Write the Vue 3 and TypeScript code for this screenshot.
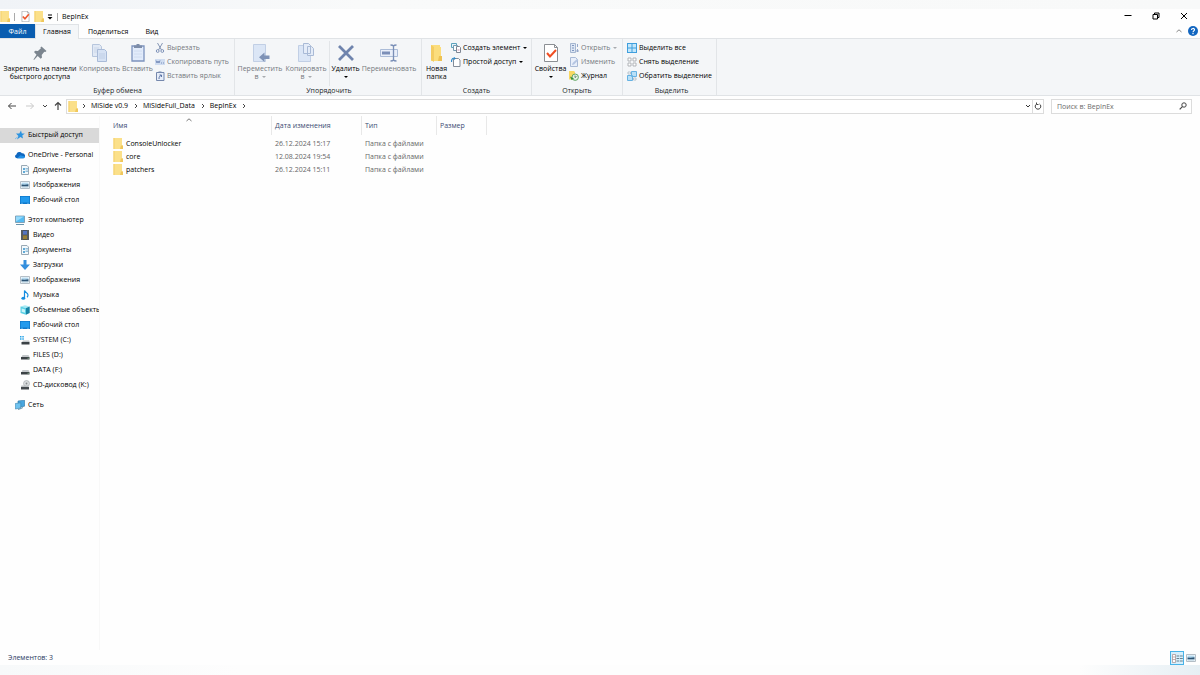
<script setup lang="ts">
import { ref } from 'vue'

interface Command {
  icon: string
  label: string
  lines?: string[]
  menu?: boolean
  off?: boolean
  split?: boolean
}
interface Group {
  id: string
  title: string
  big: Command[]
  small: Command[]
}
interface NavItem {
  icon: string
  label: string
}

const groups: Group[] = [
  {
    id: 'clipboard',
    title: 'Буфер обмена',
    big: [
      { icon: 'pin', label: 'Закрепить', lines: ['Закрепить на панели', 'быстрого доступа'] },
      { icon: 'copy', label: 'Копировать', lines: ['Копировать'], off: true },
      { icon: 'paste', label: 'Вставить', lines: ['Вставить'], off: true },
    ],
    small: [
      { icon: 'cut', label: 'Вырезать', off: true },
      { icon: 'path', label: 'Скопировать путь', off: true },
      { icon: 'shortcut', label: 'Вставить ярлык', off: true },
    ],
  },
  {
    id: 'organize',
    title: 'Упорядочить',
    big: [
      { icon: 'move', label: 'Переместить в', lines: ['Переместить', 'в'], menu: true, off: true },
      { icon: 'copyto', label: 'Копировать в', lines: ['Копировать', 'в'], menu: true, off: true },
      { icon: 'delete', label: 'Удалить', lines: ['Удалить', ''], menu: true, split: true },
      { icon: 'rename', label: 'Переименовать', lines: ['Переименовать'], off: true },
    ],
    small: [],
  },
  {
    id: 'create',
    title: 'Создать',
    big: [{ icon: 'newfolder', label: 'Новая папка', lines: ['Новая', 'папка'] }],
    small: [
      { icon: 'newitem', label: 'Создать элемент', menu: true },
      { icon: 'easy', label: 'Простой доступ', menu: true },
    ],
  },
  {
    id: 'open',
    title: 'Открыть',
    big: [{ icon: 'props', label: 'Свойства', lines: ['Свойства', ''], menu: true }],
    small: [
      { icon: 'open', label: 'Открыть', menu: true, off: true },
      { icon: 'edit', label: 'Изменить', off: true },
      { icon: 'history', label: 'Журнал' },
    ],
  },
  {
    id: 'select',
    title: 'Выделить',
    big: [],
    small: [
      { icon: 'selall', label: 'Выделить все' },
      { icon: 'selnone', label: 'Снять выделение' },
      { icon: 'selinv', label: 'Обратить выделение' },
    ],
  },
]

const sections: { root: NavItem; children: NavItem[] }[] = [
  { root: { icon: 'star', label: 'Быстрый доступ' }, children: [] },
  {
    root: { icon: 'cloud', label: 'OneDrive - Personal' },
    children: [
      { icon: 'doc', label: 'Документы' },
      { icon: 'image', label: 'Изображения' },
      { icon: 'desktop', label: 'Рабочий стол' },
    ],
  },
  {
    root: { icon: 'pc', label: 'Этот компьютер' },
    children: [
      { icon: 'video', label: 'Видео' },
      { icon: 'doc', label: 'Документы' },
      { icon: 'download', label: 'Загрузки' },
      { icon: 'image', label: 'Изображения' },
      { icon: 'music', label: 'Музыка' },
      { icon: 'cube', label: 'Объемные объекты' },
      { icon: 'desktop', label: 'Рабочий стол' },
      { icon: 'sysdisk', label: 'SYSTEM (C:)' },
      { icon: 'disk', label: 'FILES (D:)' },
      { icon: 'disk', label: 'DATA (F:)' },
      { icon: 'cd', label: 'CD-дисковод (K:)' },
    ],
  },
  { root: { icon: 'net', label: 'Сеть' }, children: [] },
]

const files = [
  { name: 'ConsoleUnlocker', date: '26.12.2024 15:17', type: 'Папка с файлами' },
  { name: 'core', date: '12.08.2024 19:54', type: 'Папка с файлами' },
  { name: 'patchers', date: '26.12.2024 15:11', type: 'Папка с файлами' },
]
const crumbs = ['MiSide v0.9', 'MiSideFull_Data', 'BepInEx']
const tabs = ['Главная', 'Поделиться', 'Вид']
const activeTab = ref('Главная')
const selected = ref('Быстрый доступ')
const query = ref('')
</script>

<template>
  <div class="explorer">
    <svg class="sprite" aria-hidden="true">
      <symbol id="folder" viewBox="0 0 10 11">
        <path d="M.500 0h8.500v7.500h1V11H.500z" fill="#fbe08a" />
        <path d="M.500 0h1v11h-1z" fill="#f3d06c" />
        <path d="M8 7.500h2V11H7z" fill="#f0c75c" />
      </symbol>
      <symbol id="check" viewBox="0 0 20 20">
        <path d="M3.500.500h10l3 3v16h-13z" fill="#fff" stroke="#8b8f94" />
        <path d="M13.500.500v3h3" fill="none" stroke="#8b8f94" />
        <path d="M5 10l4 4 7-8" fill="none" stroke="#ed5a31" stroke-width="3" />
      </symbol>
      <symbol id="props" viewBox="0 0 20 20">
        <path d="M3.500 1.500h10l3 3v14h-13z" fill="#fff" stroke="#8b8f94" />
        <path d="M13.500 1.500v3h3" fill="none" stroke="#8b8f94" />
        <path d="M6 10l3 3.500 6-6.500" fill="none" stroke="#f04e23" stroke-width="2" />
      </symbol>
      <symbol id="pin" viewBox="0 0 20 20">
        <path d="M11.500 3.500l5 4.500-1.200 1-1-.300-2.600 3.200.300 2.600-1.300 1.200-3-2.700L4 17l-.500-.500 3-4.700L4 9l1.300-1.200 2.600.200 3-2.700-.500-.900z" fill="#7b858f" />
      </symbol>
      <symbol id="copy" viewBox="0 0 20 20">
        <path d="M2.500 1.500h7l2 2v10h-9z" fill="#e1e9f5" stroke="#b7c6dd" />
        <path d="M4 5h5M4 7h4M4 9h4" stroke="#cbd7e9" />
        <path d="M7.500 6.500h7l2 2v10h-9z" fill="#d6e2f4" stroke="#a9bbd8" />
        <path d="M9 11h6M9 13h6M9 15h6" stroke="#c0cfe6" />
      </symbol>
      <symbol id="paste" viewBox="0 0 20 20">
        <path d="M4 3h12v15H4z" fill="#e1ebfb" stroke="#7c93bd" stroke-width="1.300" />
        <path d="M6 5V2.500h2.500V1h3v1.500H14V5z" fill="#7d8da9" />
        <path d="M6 8h8M6 11h8M6 14h8" stroke="#d0dcf0" />
      </symbol>
      <symbol id="move" viewBox="0 0 20 20">
        <path d="M3.500 1.500h12v17h-12z" fill="#dbe6f6" stroke="#c1cfe5" />
        <path d="M19.500 12.500h-5V9.500l-5.500 4.700 5.500 4.800v-3h5z" fill="#7e92b6" />
      </symbol>
      <symbol id="copyto" viewBox="0 0 20 20">
        <path d="M2.500 2.500h12v16h-12z" fill="#dbe6f6" stroke="#c1cfe5" />
        <path d="M7.500.500h5l2 2v8h-7zM11.500 3.500h4l2 2v7h-6z" fill="#e4ecf8" stroke="#a9bad6" />
      </symbol>
      <symbol id="delete" viewBox="0 0 20 20">
        <path d="M3 3l14 14M17 3L3 17" stroke="#6f84ad" stroke-width="2.800" />
      </symbol>
      <symbol id="rename" viewBox="0 0 20 20">
        <path d="M1.500 6.500h17v7h-17z" fill="#e9effa" stroke="#abbcd8" />
        <path d="M3 8.500h8v3H3z" fill="#7b8fb8" />
        <path d="M11.500 2c1.500 0 2.500.300 3 1 .500-.700 1.500-1 3-1M14.500 3v14M11.500 18c1.500 0 2.500-.300 3-1 .500.700 1.500 1 3 1" fill="none" stroke="#7a8fb7" stroke-width="1.300" />
      </symbol>
      <symbol id="newfolder" viewBox="0 0 20 20">
        <path d="M4 2h9v2h1v9l1 1v4H4z" fill="#fbdd7d" />
        <path d="M4 2l3 2v15l-3-2z" fill="#f4cc62" />
        <path d="M12 13h3v5h-4z" fill="#edc253" />
      </symbol>
      <symbol id="cut" viewBox="0 0 10 10">
        <path d="M2.500 0L6.500 7M7.500 0L3.500 7" stroke="#8798b6" fill="none" />
        <circle cx="2.700" cy="8" r="1.400" fill="none" stroke="#7f93b9" />
        <circle cx="7.300" cy="8" r="1.400" fill="none" stroke="#7f93b9" />
      </symbol>
      <symbol id="path" viewBox="0 0 10 10">
        <path d="M0 2h10v6H0z" fill="#cfdcf0" />
        <path d="M1 3.500l1 2.500 1-2 1 2 1-2.500M6 6h1M8 6h1" fill="none" stroke="#6d85b3" stroke-width=".9" />
      </symbol>
      <symbol id="shortcut" viewBox="0 0 10 10">
        <path d="M1.500 1.500h7.500v8H1.500z" fill="#e6edf9" stroke="#7588ad" />
        <path d="M3.500.500h3v1.500h-3z" fill="#7588ad" />
        <path d="M4 8c0-2 .5-3 2-3.500M4.500 4h2v2" fill="none" stroke="#5c74a5" />
      </symbol>
      <symbol id="newitem" viewBox="0 0 10 10">
        <path d="M.500.500h5v4h-5z" fill="#e8f4fb" stroke="#5ba2bd" />
        <path d="M2.500 2.500h4v5h-4z" fill="#fff" stroke="#769ab0" />
        <path d="M5.500 3.500h3l1 1v5h-4z" fill="#fff" stroke="#7f8794" />
        <path d="M6.500 6h2v2h-2z" fill="#e9c6d6" />
      </symbol>
      <symbol id="easy" viewBox="0 0 10 10">
        <path d="M2.500 1.500h5l1.500 1.500v6.500H2.500z" fill="#fff" stroke="#848d99" />
        <path d="M.500 5c0-3 1-4 3-4" fill="none" stroke="#2f8ac9" stroke-width="1.200" />
        <path d="M3 0l2 1.500L3 3z" fill="#2f8ac9" />
      </symbol>
      <symbol id="open" viewBox="0 0 10 10">
        <path d="M1.500.500h5v9h-5z" fill="#dce6f4" stroke="#a5b6d0" />
        <path d="M3 2.500h2M3 5h2M3 7.500h2" stroke="#7f96bf" />
        <path d="M8.500 1v3M8.500 6v3M7 8h3" stroke="#94a7ca" />
      </symbol>
      <symbol id="edit" viewBox="0 0 10 10">
        <path d="M1.500.500h5l2 2v7h-7z" fill="#e9effa" stroke="#a9bad6" />
        <path d="M3 8l.600-2L8 2l1.300 1.300L5 7.500z" fill="#b4c5e2" />
      </symbol>
      <symbol id="history" viewBox="0 0 10 10">
        <path d="M0 0h5l1 1v7.500H0z" fill="#f8d862" />
        <circle cx="6.200" cy="6.200" r="3.200" fill="#e7f3e5" stroke="#62a766" />
        <path d="M6 4.500v2l1.500-1" fill="none" stroke="#4a6450" stroke-width=".8" />
        <path d="M1 5.500l1.500 3.500L5 7.500z" fill="#37913f" />
      </symbol>
      <symbol id="selall" viewBox="0 0 10 10">
        <path d="M0 0h10v10H0z" fill="#3f9fdd" />
        <path d="M1 1h3.500v3.500H1zM5.500 1H9v3.500H5.500zM1 5.500h3.500V9H1zM5.500 5.500H9V9H5.500z" fill="#c4e7fb" />
      </symbol>
      <symbol id="selnone" viewBox="0 0 10 10">
        <path d="M1 1h3v3H1zM6 1h3v3H6zM1 6h3v3H1zM6 6h3v3H6z" fill="#fff" stroke="#a9adb1" stroke-width=".9" />
      </symbol>
      <symbol id="selinv" viewBox="0 0 10 10">
        <path d="M4.500.500h5v5h-5zM.500 4.500h5v5h-5z" fill="#b8e0f8" stroke="#66b2e2" />
        <path d="M1 1h2.500v2H1zM6.500 7H9v2H6.500z" fill="#fff" stroke="#9fb0bd" stroke-width=".7" />
      </symbol>
      <symbol id="star" viewBox="0 0 10 10">
        <path d="M6 .500l.800 2.900 3 .200-2.500 1.900.700 3-2.600-1.500L2 9.500l1.400-3.600L1 3.600l3.300-.200z" fill="#2c93e0" />
        <path d="M0 9l2.500-2" stroke="#7fbdea" />
      </symbol>
      <symbol id="cloud" viewBox="0 0 10 10">
        <path d="M2 8.300A2 2 0 0 1 1.400 4.400 3 3 0 0 1 6.900 3.300 2.600 2.600 0 0 1 8.300 8.300z" fill="#0f67bf" />
        <path d="M2 8.300l3.400-3 4.300 1.200c.2 1-.3 1.800-1.300 1.800z" fill="#2191e8" />
      </symbol>
      <symbol id="doc" viewBox="0 0 10 10">
        <path d="M1.500.500h5.500l1.500 1.500v7.500h-7z" fill="#f3f9fc" stroke="#9aa9b4" />
        <path d="M3 3h2v2H3zM3 6h2v2H3z" fill="#62aad6" />
        <path d="M5.500 3.500H8M5.500 5H8M5.500 6.500H8" stroke="#68a5ca" stroke-width=".7" />
      </symbol>
      <symbol id="image" viewBox="0 0 10 10">
        <path d="M.500 1.500h9v7h-9z" fill="#fff" stroke="#b4bec6" />
        <path d="M1.500 2.500h7v3h-7z" fill="#b4d9ef" />
        <path d="M1.500 4.500l3 .300 4-.500v2.200h-7z" fill="#2d5474" />
        <path d="M1.500 6.500h7v1h-7z" fill="#a5c6da" />
      </symbol>
      <symbol id="desktop" viewBox="0 0 10 10">
        <path d="M0 1h10v8H0z" fill="#0e77c9" />
        <path d="M.700 1.700h8.600v5.800H.700z" fill="#229aed" />
        <path d="M1 8.300h2M7 8.300h2" stroke="#7fc7f7" stroke-width=".6" />
      </symbol>
      <symbol id="pc" viewBox="0 0 10 10">
        <path d="M.500 1h9v6.500h-9z" fill="#55bbf2" stroke="#7794a7" stroke-width=".8" />
        <path d="M1 1.500h8L1 6.500z" fill="#96dafb" />
        <path d="M1 9.500h8" stroke="#6994ad" />
      </symbol>
      <symbol id="video" viewBox="0 0 10 10">
        <path d="M1 0h8v10H1z" fill="#3c4246" />
        <path d="M3 .700h4v4H3z" fill="#5575bf" />
        <path d="M3 5.300h4v4H3z" fill="#987f36" />
        <path d="M2 .500v9M8 .500v9" stroke="#c3c8cb" stroke-dasharray="1 1" stroke-width=".8" />
      </symbol>
      <symbol id="download" viewBox="0 0 10 10">
        <path d="M3.500 0h3v4.500H10L5 10 0 4.500h3.500z" fill="#348fdd" />
      </symbol>
      <symbol id="music" viewBox="0 0 10 10">
        <path d="M4.500 8V.500c.5 2 3.500 2 3.500 4.500 0 1-.5 1.800-1 2.200" fill="none" stroke="#168de0" stroke-width="1.200" />
        <ellipse cx="3.300" cy="8.200" rx="1.900" ry="1.500" fill="#168de0" />
      </symbol>
      <symbol id="cube" viewBox="0 0 10 10">
        <path d="M.500 1.500L5 .300l4.700 1.200L6 3z" fill="#a6e9f4" />
        <path d="M.500 1.500L6 3v6.800L.500 8z" fill="#5bd0e5" />
        <path d="M6 3l3.700-1.500V8L6 9.800z" fill="#1683a5" />
        <path d="M1.700 3.500L5 4.500v3.200l-3.300-1z" fill="#c8f4fa" />
      </symbol>
      <symbol id="disk" viewBox="0 0 10 10">
        <path d="M2.500 5h6l1 2h-8z" fill="#c3c7ca" />
        <path d="M1 7h8.500v2.500H1z" fill="#3b4145" />
        <path d="M7.500 8.300H9" stroke="#a2dfa7" stroke-width=".6" />
      </symbol>
      <symbol id="sysdisk" viewBox="0 0 10 10">
        <path d="M0 1h1.500v1.500H0zM2.300 1h1.500v1.500H2.300zM0 3.300h1.500v1.500H0zM2.300 3.300h1.500v1.500H2.300z" fill="#29a4e8" />
        <path d="M3 5.500h6l.700 1.500H2z" fill="#c3c7ca" />
        <path d="M1.500 7h8v2.500h-8z" fill="#3b4145" />
      </symbol>
      <symbol id="cd" viewBox="0 0 10 10">
        <circle cx="6.500" cy="3.500" r="3" fill="#d9dcde" stroke="#9fa4a8" stroke-width=".6" />
        <circle cx="6.500" cy="3.500" r=".9" fill="#86898b" />
        <path d="M1.500 5.500h6.500l1 1.500H1z" fill="#b9bdc0" />
        <path d="M1 7h8v2.500H1z" fill="#44494d" />
      </symbol>
      <symbol id="net" viewBox="0 0 10 10">
        <path d="M3 1l6.500-.800v6L3 7.500z" fill="#48a6df" stroke="#2a729f" stroke-width=".6" />
        <path d="M.300 3.500l5.500-.700V8l-5.500 1z" fill="#6fc3f0" stroke="#3782ad" stroke-width=".6" />
        <path d="M3 9.500l3-1 2-1" stroke="#497d9b" stroke-width=".8" fill="none" />
      </symbol>
      <symbol id="back" viewBox="0 0 10 10">
        <path d="M9 5H1.500M4.500 2l-3 3 3 3" fill="none" stroke="currentColor" />
      </symbol>
      <symbol id="forward" viewBox="0 0 10 10">
        <path d="M1 5h7.500M5.500 2l3 3-3 3" fill="none" stroke="currentColor" />
      </symbol>
      <symbol id="up" viewBox="0 0 10 10">
        <path d="M5 9V1.500M2 4.500l3-3 3 3" fill="none" stroke="currentColor" stroke-width="1.200" />
      </symbol>
      <symbol id="chevdown" viewBox="0 0 6 6">
        <path d="M1 2l2 2 2-2" fill="none" stroke="currentColor" />
      </symbol>
      <symbol id="chevright" viewBox="0 0 6 6">
        <path d="M2 1l2 2-2 2" fill="none" stroke="currentColor" stroke-width=".9" />
      </symbol>
      <symbol id="chevup" viewBox="0 0 6 6">
        <path d="M.500 4L3 1.800 5.500 4" fill="none" stroke="currentColor" stroke-width=".8" />
      </symbol>
      <symbol id="refresh" viewBox="0 0 8 8">
        <path d="M2.500 2A2.800 2.800 0 1 0 5.500 2M2.500.500V2.500H4.500" fill="none" stroke="currentColor" />
      </symbol>
      <symbol id="search" viewBox="0 0 8 8">
        <circle cx="5" cy="3" r="2.200" fill="none" stroke="currentColor" />
        <path d="M3.400 4.600L.700 7.300" stroke="currentColor" stroke-width="1.200" />
      </symbol>
      <symbol id="min" viewBox="0 0 8 8">
        <path d="M.500 3.500h7" stroke="currentColor" />
      </symbol>
      <symbol id="restore" viewBox="0 0 8 8">
        <path d="M1 2.500h4.500V7H1zM2.500 2.500V1H7v4.500H5.500" fill="none" stroke="currentColor" />
      </symbol>
      <symbol id="close" viewBox="0 0 8 8">
        <path d="M1 1l6 6M7 1L1 7" stroke="currentColor" />
      </symbol>
      <symbol id="qat" viewBox="0 0 6 6">
        <path d="M1 1h4" stroke="currentColor" />
        <path d="M.500 3h5L3 5.500z" fill="currentColor" />
      </symbol>
      <symbol id="help" viewBox="0 0 10 10">
        <circle cx="5" cy="5" r="5" fill="#1266c0" />
        <path d="M3.500 4c0-2 3-2 3-.200 0 1-1.500 1.200-1.500 2.400M5 7v1.200" fill="none" stroke="#fff" stroke-width="1.200" />
      </symbol>
      <symbol id="details" viewBox="0 0 12 12">
        <path d="M1.500 2.500h3v8h-3z" fill="#fff" stroke="#a58d8d" stroke-width=".7" />
        <path d="M1.500 5h3M1.500 7.500h3" stroke="#a58d8d" stroke-width=".7" />
        <path d="M5.500 4H12M5.500 6.500H12M5.500 9H12" stroke="#5c7482" stroke-width=".9" stroke-dasharray="2.800 .7" />
      </symbol>
    </svg>

    <div class="edge"></div>
    <header class="title">
      <svg class="f"><use href="#folder" /></svg>
      <i class="bar"></i>
      <button class="plain qprops" aria-label="Свойства"><svg class="ic11"><use href="#check" /></svg></button>
      <button class="plain" aria-label="Новая папка"><svg class="f"><use href="#folder" /></svg></button>
      <button class="plain qmenu" aria-label="Настроить панель"><svg class="ic6"><use href="#qat" /></svg></button>
      <i class="bar"></i>
      <h1>BepInEx</h1>
      <div class="controls">
        <button class="plain" aria-label="Свернуть"><svg class="ic8"><use href="#min" /></svg></button>
        <button class="plain" aria-label="Восстановить"><svg class="ic8"><use href="#restore" /></svg></button>
        <button class="plain" aria-label="Закрыть"><svg class="ic8"><use href="#close" /></svg></button>
      </div>
    </header>

    <nav class="tabs">
      <button class="tab file">Файл</button>
      <button v-for="t in tabs" :key="t" class="tab" :class="{ active: activeTab === t }" @click="activeTab = t">{{ t }}</button>
      <div class="tabend">
        <button class="plain collapse" aria-label="Свернуть ленту"><svg class="ic6"><use href="#chevup" /></svg></button>
        <button class="plain" aria-label="Справка"><svg class="ic10"><use href="#help" /></svg></button>
      </div>
    </nav>

    <div class="ribbon">
      <section v-for="g in groups" :key="g.id" class="group" :class="g.id">
        <div class="cmds">
          <button v-for="c in g.big" :key="c.icon" class="big" :class="{ off: c.off, split: c.split }" :aria-label="c.label" :disabled="c.off">
            <svg class="ic20"><use :href="'#' + c.icon" /></svg>
            <span v-for="(l, i) in c.lines" :key="i" class="line">{{ l }}<i v-if="c.menu && i === 1" class="caret" :class="{ alone: !l }"></i></span>
          </button>
          <div v-if="g.small.length" class="list">
            <button v-for="c in g.small" :key="c.icon" class="small" :class="{ off: c.off }" :disabled="c.off">
              <svg class="ic10"><use :href="'#' + c.icon" /></svg><span>{{ c.label }}</span><i v-if="c.menu" class="caret"></i>
            </button>
          </div>
        </div>
        <h2>{{ g.title }}</h2>
      </section>
    </div>

    <div class="address">
      <div class="history">
        <button class="plain" aria-label="Назад"><svg class="ic10"><use href="#back" /></svg></button>
        <button class="plain dim" aria-label="Вперед" disabled><svg class="ic10"><use href="#forward" /></svg></button>
        <button class="plain" aria-label="Последние расположения"><svg class="ic6"><use href="#chevdown" /></svg></button>
        <button class="plain" aria-label="Вверх"><svg class="ic10"><use href="#up" /></svg></button>
      </div>
      <div class="box path">
        <svg class="f"><use href="#folder" /></svg>
        <svg class="ic6 sep"><use href="#chevright" /></svg>
        <template v-for="c in crumbs" :key="c">
          <a href="#">{{ c }}</a>
          <svg class="ic6 sep"><use href="#chevright" /></svg>
        </template>
        <button class="plain drop" aria-label="Предыдущие расположения"><svg class="ic6"><use href="#chevdown" /></svg></button>
        <button class="plain refresh" aria-label="Обновить"><svg class="ic8"><use href="#refresh" /></svg></button>
      </div>
      <label class="box search">
        <input v-model="query" type="text" placeholder="Поиск в: BepInEx" aria-label="Поиск в: BepInEx" />
        <svg class="ic8"><use href="#search" /></svg>
      </label>
    </div>

    <div class="main">
      <aside class="tree">
        <ul v-for="s in sections" :key="s.root.label">
          <li>
            <a href="#" class="root" :class="{ on: selected === s.root.label }" @click.prevent="selected = s.root.label">
              <svg class="ic10"><use :href="'#' + s.root.icon" /></svg><span>{{ s.root.label }}</span>
            </a>
          </li>
          <li v-for="c in s.children" :key="c.label">
            <a href="#" class="child"><svg class="ic10"><use :href="'#' + c.icon" /></svg><span>{{ c.label }}</span></a>
          </li>
        </ul>
      </aside>
      <main>
        <table>
          <colgroup><col class="c1" /><col class="c2" /><col class="c3" /><col class="c4" /></colgroup>
          <thead>
            <tr>
              <th>Имя<svg class="ic6 sort"><use href="#chevup" /></svg></th>
              <th>Дата изменения</th>
              <th>Тип</th>
              <th>Размер</th>
            </tr>
          </thead>
          <tbody>
            <tr v-for="f in files" :key="f.name">
              <td><div class="name"><svg class="f"><use href="#folder" /></svg><span>{{ f.name }}</span></div></td>
              <td>{{ f.date }}</td>
              <td>{{ f.type }}</td>
              <td></td>
            </tr>
          </tbody>
        </table>
      </main>
    </div>

    <footer class="status">
      <span>Элементов: 3</span>
      <div class="views">
        <button class="plain view on" aria-label="Таблица"><svg class="ic12"><use href="#details" /></svg></button>
        <button class="plain view" aria-label="Крупные значки"><svg class="ic10"><use href="#image" /></svg></button>
      </div>
    </footer>
    <div class="edge bottom"></div>
  </div>
</template>

<style>
body {
  margin: 0;
  background: #fefefe;
}
</style>

<style scoped>
.explorer {
  display: flex;
  flex-direction: column;
  min-height: 100vh;
  background: #fefefe;
  color: #000;
  font: 7px/10px "Open Sans", "Noto Sans", sans-serif;
  overflow: hidden;
}
.explorer * {
  box-sizing: border-box;
}
.sprite {
  position: absolute;
  width: 0;
  height: 0;
}
svg {
  display: block;
  flex: none;
}
.ic6 { width: 6px; height: 6px; }
.ic8 { width: 8px; height: 8px; }
.ic10 { width: 10px; height: 10px; }
.ic11 { width: 11px; height: 11px; }
.ic12 { width: 12px; height: 12px; }
.ic20 { width: 20px; height: 20px; }
.f { width: 10px; height: 11px; }
button {
  font: inherit;
  color: inherit;
  background: none;
  border: 0;
  padding: 0;
}
.plain {
  display: flex;
  align-items: center;
  justify-content: center;
}
a {
  color: inherit;
  text-decoration: none;
}
h1, h2 {
  margin: 0;
  font: inherit;
}
.edge {
  height: 9px;
  background: linear-gradient(90deg, #f0f3f7, #f9fafa 30%, #f8f9f9);
}
.edge.bottom {
  height: 10px;
  background: linear-gradient(90deg, #f7f9fa, #fdfdfd 20%, #fdfdfd 90%, #e6eff4);
}
.title {
  display: flex;
  align-items: center;
  height: 15px;
}
.bar {
  width: 1px;
  height: 8px;
  margin: 0 4px;
  background: #aaa;
}
.qprops { margin: 0 3px 0 1px; }
.qmenu { margin: 0 1px 0 3px; }
.title .qmenu + .bar { margin: 0 4px 0 3px; }
.controls {
  display: flex;
  gap: 20px;
  margin-left: auto;
  padding: 0 12px 2px 0;
}
.tabs {
  display: flex;
  height: 14px;
}
.tab {
  padding: 0 8px 0 9px;
  border-top: 1px solid transparent;
}
.tab.file {
  width: 35px;
  padding: 0;
  background: #0a5db0;
  color: #fff;
}
.tab.active {
  position: relative;
  z-index: 1;
  width: 44px;
  height: 15px;
  padding: 0 0 1px;
  background: #f4f6f8;
  border: 1px solid #e0e3e6;
  border-bottom: 0;
}
.tabend {
  display: flex;
  align-items: center;
  gap: 6px;
  margin-left: auto;
  padding: 0 2px 1px 0;
}
.collapse { color: #666; }
.ribbon {
  display: flex;
  height: 58px;
  background: #f4f6f8;
  border: solid #e0e3e6;
  border-width: 1px 0;
}
.group {
  display: flex;
  flex-direction: column;
  border-right: 1px solid #e2e5e8;
}
.clipboard { width: 235px; padding-left: 1px; }
.organize { width: 187px; padding-left: 2px; }
.create { width: 110px; }
.open { width: 91px; }
.select { width: 94px; padding-left: 4px; }
.cmds {
  display: flex;
  flex: 1;
  padding-top: 2px;
}
.group h2 {
  height: 9px;
  line-height: 9px;
  color: #22262a;
  text-align: center;
}
.big {
  display: flex;
  flex-direction: column;
  align-items: center;
  white-space: nowrap;
}
.big .ic20 {
  margin: 2px 0;
}
.line {
  display: flex;
  align-items: center;
  justify-content: center;
  height: 8px;
}
.clipboard .big:nth-child(1) { width: 78px; }
.clipboard .big:nth-child(2) { width: 41px; }
.clipboard .big:nth-child(3) { width: 35px; }
.organize .big:nth-child(1) { width: 46px; }
.organize .big:nth-child(2) { width: 46px; }
.organize .big:nth-child(3) { width: 32px; }
.organize .big:nth-child(4) { width: 56px; }
.create .big { width: 29px; }
.open .big { width: 37px; }
.split {
  border-left: 1px solid #e2e5e8;
}
.off { color: #75797e; }
.caret {
  margin-left: 3px;
  border: 2px solid transparent;
  border-top-color: currentColor;
  border-bottom: 0;
}
.off .caret { opacity: 0.6; }
.caret.alone { margin-left: 0; }
.small {
  display: flex;
  align-items: center;
  height: 14px;
  white-space: nowrap;
}
.small .ic10 { margin-right: 2px; }
.address {
  display: flex;
  align-items: center;
  height: 20px;
  padding-right: 8px;
}
.history {
  display: flex;
  align-items: center;
  gap: 8px;
  width: 66px;
  padding-left: 7px;
  color: #444;
}
.history .dim { color: #c9c9c9; }
.history .plain:nth-child(2) { margin-right: -1px; }
.history .plain:nth-child(3) { margin-right: -3px; }
.box {
  display: flex;
  align-items: center;
  height: 15px;
  border: 1px solid #dcdcdc;
  background: #fff;
}
.path {
  flex: 1;
  padding-left: 1px;
}
.sep { margin: 0 4px 0 5px; color: #333; }
.path .f + .sep { margin-left: 3px; }
.drop { margin-left: auto; margin-right: 1px; color: #333; }
.refresh {
  width: 11px;
  height: 13px;
  border-left: 1px solid #dcdcdc;
  color: #444;
}
.search {
  width: 141px;
  margin-left: 7px;
  padding: 0 4px 0 5px;
  color: #444;
}
.search input {
  flex: 1;
  min-width: 0;
  height: 12px;
  padding: 0;
  border: 0;
  outline: 0;
  background: none;
  font: inherit;
}
.search input::placeholder {
  color: #6b6b6b;
  opacity: 1;
}
.main {
  display: flex;
  flex: 1;
}
.tree {
  width: 100px;
  padding-top: 12px;
  border-right: 1px solid #f8f8f8;
}
ul {
  margin: 0 0 5px;
  padding: 0;
  list-style: none;
}
.tree a {
  display: flex;
  align-items: center;
  gap: 3px;
  height: 15px;
  padding-bottom: 1px;
  overflow: hidden;
  white-space: nowrap;
}
.root { padding-left: 15px; }
.child { padding-left: 20px; }
.on.root { background: #d9d9d9; }
table {
  width: 387px;
  table-layout: fixed;
  border-collapse: separate;
  border-spacing: 0;
}
.c1 { width: 172px; }
.c2 { width: 90px; }
.c3 { width: 75px; }
.c4 { width: 50px; }
th, td {
  padding: 0 0 0 3px;
  text-align: left;
  font-weight: 400;
  white-space: nowrap;
}
th {
  position: relative;
  height: 19px;
  padding-top: 1px;
  color: #3b4b73;
  border-right: 1px solid #e8e8e8;
}
th:first-child, td:first-child { padding-left: 13px; }
tbody::before {
  content: "";
  display: block;
  height: 2px;
}
td {
  height: 13px;
  color: #666;
}
.name {
  display: flex;
  align-items: center;
  gap: 3px;
  color: #000;
}
.sort {
  position: absolute;
  top: 1px;
  left: 50%;
  color: #555;
}
.status {
  display: flex;
  align-items: center;
  height: 15px;
  padding: 0 4px 0 8px;
  color: #2b3a5e;
}
.views {
  display: flex;
  gap: 2px;
  margin-left: auto;
}
.view {
  height: 14px;
}
.view.on {
  width: 14px;
  border: 1px solid #48b3e8;
  background: #d6effc;
}
</style>
